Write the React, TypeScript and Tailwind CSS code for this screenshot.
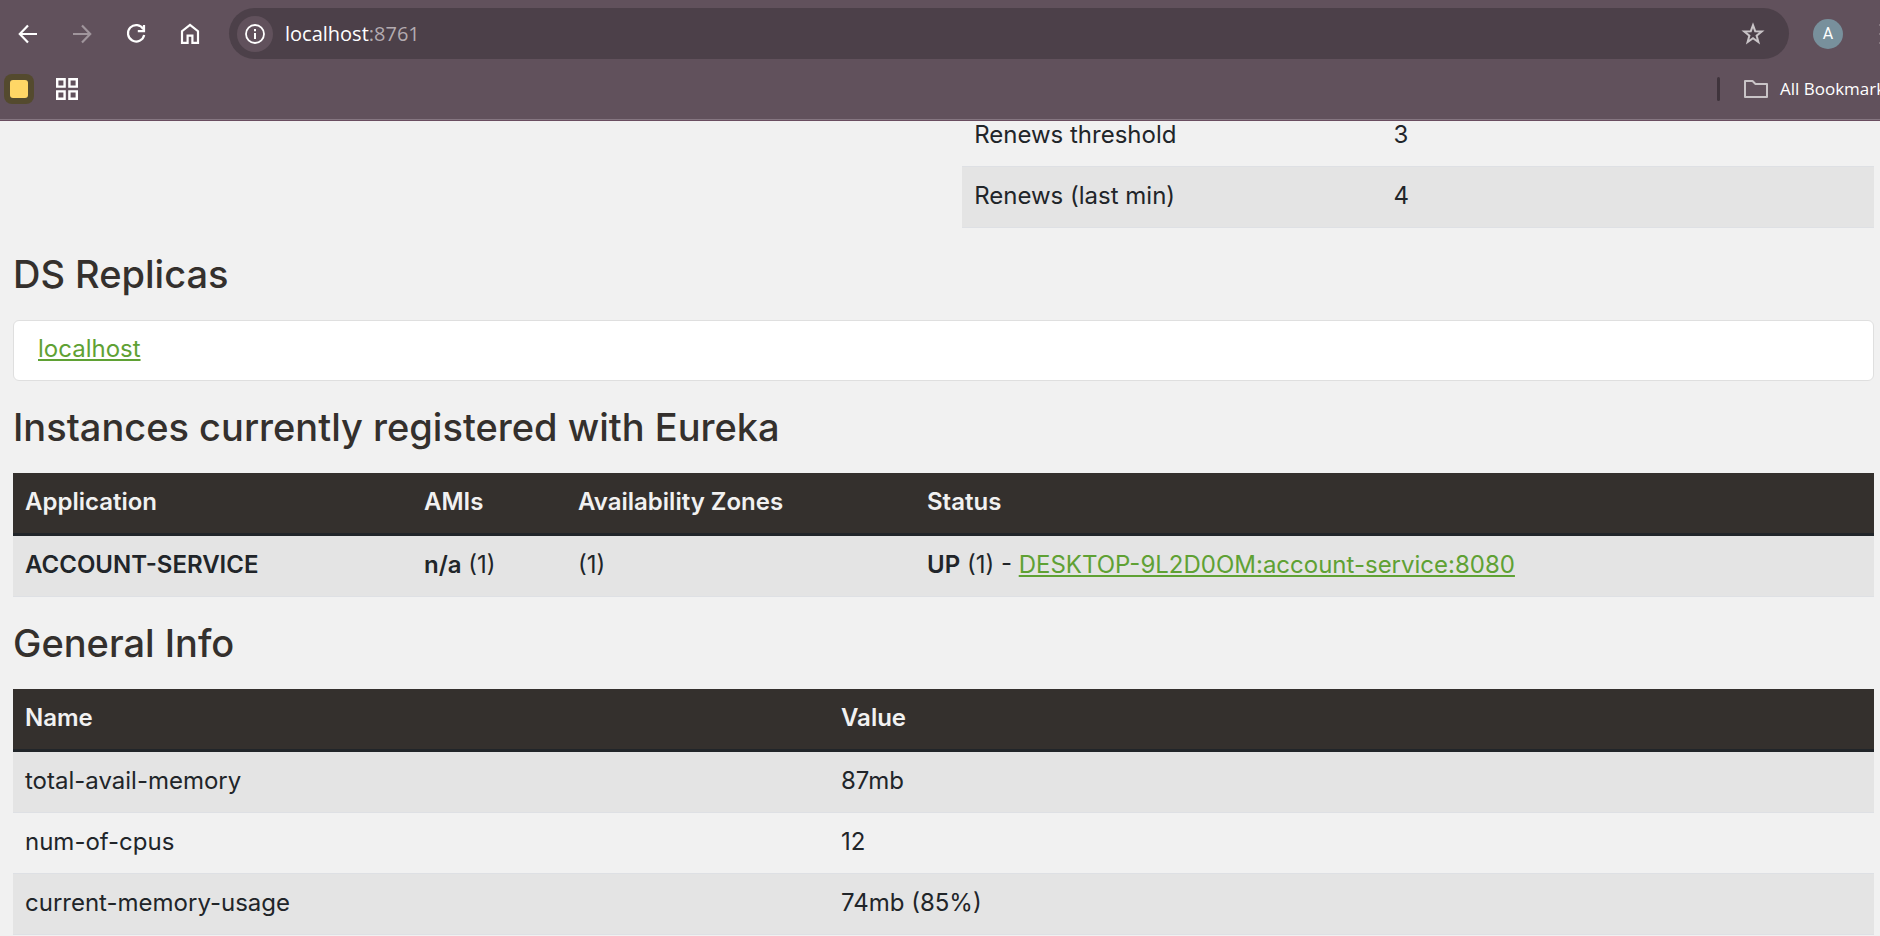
import type { ReactNode } from "react";

function Icon({ size, children, className = "" }: { size: number; children: ReactNode; className?: string }) {
  return (
    <svg
      width={size}
      height={size}
      viewBox="0 0 24 24"
      fill="none"
      stroke="currentColor"
      strokeWidth={2.2}
      className={className}
      aria-hidden="true"
    >
      {children}
    </svg>
  );
}

function ToolButton({ label, muted = false, children }: { label: string; muted?: boolean; children: ReactNode }) {
  return (
    <button
      type="button"
      aria-label={label}
      className={`flex h-9 w-9 shrink-0 items-center justify-center ${muted ? "text-[#a0959c]" : "text-white"}`}
    >
      {children}
    </button>
  );
}

function BrowserBar() {
  return (
    <header className="relative z-10 h-[121px] overflow-hidden border-b border-[#6a4d60] bg-[#61515c] font-['Open_Sans',sans-serif]">
      <div className="flex h-[67px] items-center pl-[10px]">
        <div className="flex gap-[18px]">
          <ToolButton label="Back">
            <Icon size={24}>
              <path d="M21 12H4M12 3.5 3.8 12l8.2 8.5" />
            </Icon>
          </ToolButton>
          <ToolButton label="Forward" muted>
            <Icon size={24}>
              <path d="M3 12h17M12 3.5l8.2 8.5-8.2 8.5" />
            </Icon>
          </ToolButton>
          <ToolButton label="Reload">
            <Icon size={24}>
              <path d="M19.3 7.2A8.2 8.2 0 1 0 20.2 13" />
              <path d="M20 3v6.2h-6.2" />
            </Icon>
          </ToolButton>
          <ToolButton label="Home">
            <Icon size={24}>
              <path d="M4 20.9V9.2l8-6.3 8 6.3v11.7h-5.6v-7.3H9.6v7.3Z" />
            </Icon>
          </ToolButton>
        </div>
        <div className="ml-[21px] flex h-[51px] min-w-0 flex-1 items-center rounded-full bg-[#4c4049] pl-2 pr-6">
          <button
            type="button"
            aria-label="View site information"
            className="flex h-9 w-9 shrink-0 items-center justify-center rounded-full bg-[#61515c] text-white"
          >
            <svg width="20" height="20" viewBox="0 0 20 20" fill="none" stroke="currentColor" strokeWidth="1.8" aria-hidden="true">
              <circle cx="10" cy="10" r="9" />
              <path d="M10 9v6M10 5v2.2" strokeWidth="2" />
            </svg>
          </button>
          <div className="ml-3 flex-1 text-[20px] leading-7 text-[#b3abb0]">
            <span className="text-white">localhost</span>:8761
          </div>
          <button type="button" aria-label="Bookmark this tab" className="text-[#c9c4c7]">
            <Icon size={24}>
              <path
                strokeWidth="2"
                d="m12 3.2 2.2 6 6.6.3-5.2 4.1 1.8 6.4-5.4-3.7L6.600 20l1.800-6.400-5.200-4.100 6.600-.300Z"
              />
            </Icon>
          </button>
        </div>
        <button
          type="button"
          aria-label="Profile"
          className="ml-6 h-[30px] w-[30px] shrink-0 rounded-full bg-[#78909c] text-center font-['Roboto',sans-serif] text-[16px] leading-[30px] text-white"
        >
          A
        </button>
        <button type="button" aria-label="Menu" className="ml-9 h-6 w-px shrink-0 overflow-hidden">
          <svg width="4" height="24" viewBox="0 0 4 24" fill="#85777f" aria-hidden="true">
            <path d="M0 2h4v2H0zM0 11h4v2H0zM0 20h4v2H0z" />
          </svg>
        </button>
      </div>
      <div className="flex h-[53px] items-start border-b border-[#857681] pl-1">
        <button
          type="button"
          aria-label="Tab group"
          className="mt-[7px] flex h-[30px] w-[30px] items-center justify-center rounded-lg bg-[#544a2e]"
        >
          <span className="h-[18px] w-[18px] rounded-[3px] bg-[#ffd666]" />
        </button>
        <button type="button" aria-label="Apps" className="ml-[22px] mt-[11px] text-white">
          <svg width="22" height="22" viewBox="0 0 22 22" fill="none" stroke="currentColor" strokeWidth="2.4" aria-hidden="true">
            <path d="M1.200 1.200h7.400v7.400H1.200zM13.400 1.200h7.400v7.400h-7.400zM1.200 13.400h7.400v7.400H1.200zM13.400 13.400h7.400v7.400h-7.400z" />
          </svg>
        </button>
        <div className="ml-auto flex h-11 w-[163px] shrink-0 items-center overflow-hidden">
          <span className="h-6 w-[3px] shrink-0 rounded-sm bg-[#3f343c]" />
          <button type="button" className="ml-6 flex shrink-0 items-center gap-3 whitespace-nowrap text-[17px] leading-6 text-white">
            <svg width="24" height="18" viewBox="0 0 24 18" fill="none" stroke="#c9c4c7" strokeWidth="2" strokeLinejoin="round" aria-hidden="true">
              <path d="M1 1h7.500l3 3H23v13H1Z" />
            </svg>
            All Bookmarks
          </button>
        </div>
      </div>
    </header>
  );
}

function Heading({ children }: { children: ReactNode }) {
  return (
    <h1 className="flex h-[92px] items-center font-['Inter',sans-serif] text-[38px] font-medium leading-[44px] text-[#34302d]">
      {children}
    </h1>
  );
}

function Th({ width = "", children }: { width?: string; children: ReactNode }) {
  return <th className={`h-[63px] border-b-[3px] border-[#212529] px-3 pb-[3px] text-left font-semibold ${width}`}>{children}</th>;
}

function Td({ width = "", children }: { width?: string; children: ReactNode }) {
  return <td className={`h-[61px] border-b border-[#dee0e4] px-3 pb-[3px] ${width}`}>{children}</td>;
}

const tableStyle = "w-full table-fixed border-separate border-spacing-0";
const headStyle = "bg-[#34302d] text-[#f1f1f1]";
const linkStyle = "text-[#5fa134] underline decoration-2 underline-offset-2";

const generalInfo = [
  ["total-avail-memory", "87mb"],
  ["num-of-cpus", "12"],
  ["current-memory-usage", "74mb (85%)"],
];

export default function App() {
  return (
    <div className="h-screen overflow-hidden bg-[#f1f1f1] font-['Inter',sans-serif] text-[24px] leading-9 text-[#212529]">
      <BrowserBar />
      <main className="pl-[13px] pr-[6px]">
        <div className="-mt-[15px] flex justify-end">
          <div className="w-[49%]">
            <table className={tableStyle}>
              <tbody>
                <tr>
                  <Td width="w-[46%]">Renews threshold</Td>
                  <Td>3</Td>
                </tr>
                <tr className="bg-[#e4e4e4]">
                  <Td>Renews (last min)</Td>
                  <Td>4</Td>
                </tr>
              </tbody>
            </table>
          </div>
        </div>

        <Heading>DS Replicas</Heading>
        <ul className="rounded-md border border-[#dfdfdf] bg-white px-6 pb-[13px] pt-[10px]">
          <li>
            <a href="#localhost" className={linkStyle}>localhost</a>
          </li>
        </ul>

        <Heading>Instances currently registered with Eureka</Heading>
        <table className={tableStyle}>
          <thead className={headStyle}>
            <tr>
              <Th width="w-[399px]">Application</Th>
              <Th width="w-[154px]">AMIs</Th>
              <Th width="w-[349px]">Availability Zones</Th>
              <Th>Status</Th>
            </tr>
          </thead>
          <tbody>
            <tr className="bg-[#e4e4e4]">
              <Td><b className="font-semibold">ACCOUNT-SERVICE</b></Td>
              <Td><b className="font-semibold">n/a</b> (1)</Td>
              <Td>(1)</Td>
              <Td>
                <b className="font-semibold">UP</b> (1) -{" "}
                <a href="#account-service" className={linkStyle}>DESKTOP-9L2D0OM:account-service:8080</a>
              </Td>
            </tr>
          </tbody>
        </table>

        <Heading>General Info</Heading>
        <table className={tableStyle}>
          <thead className={headStyle}>
            <tr>
              <Th width="w-[816px]">Name</Th>
              <Th>Value</Th>
            </tr>
          </thead>
          <tbody>
            {generalInfo.map(([name, value]) => (
              <tr key={name} className="odd:bg-[#e4e4e4]">
                <Td>{name}</Td>
                <Td>{value}</Td>
              </tr>
            ))}
          </tbody>
        </table>
      </main>
    </div>
  );
}
